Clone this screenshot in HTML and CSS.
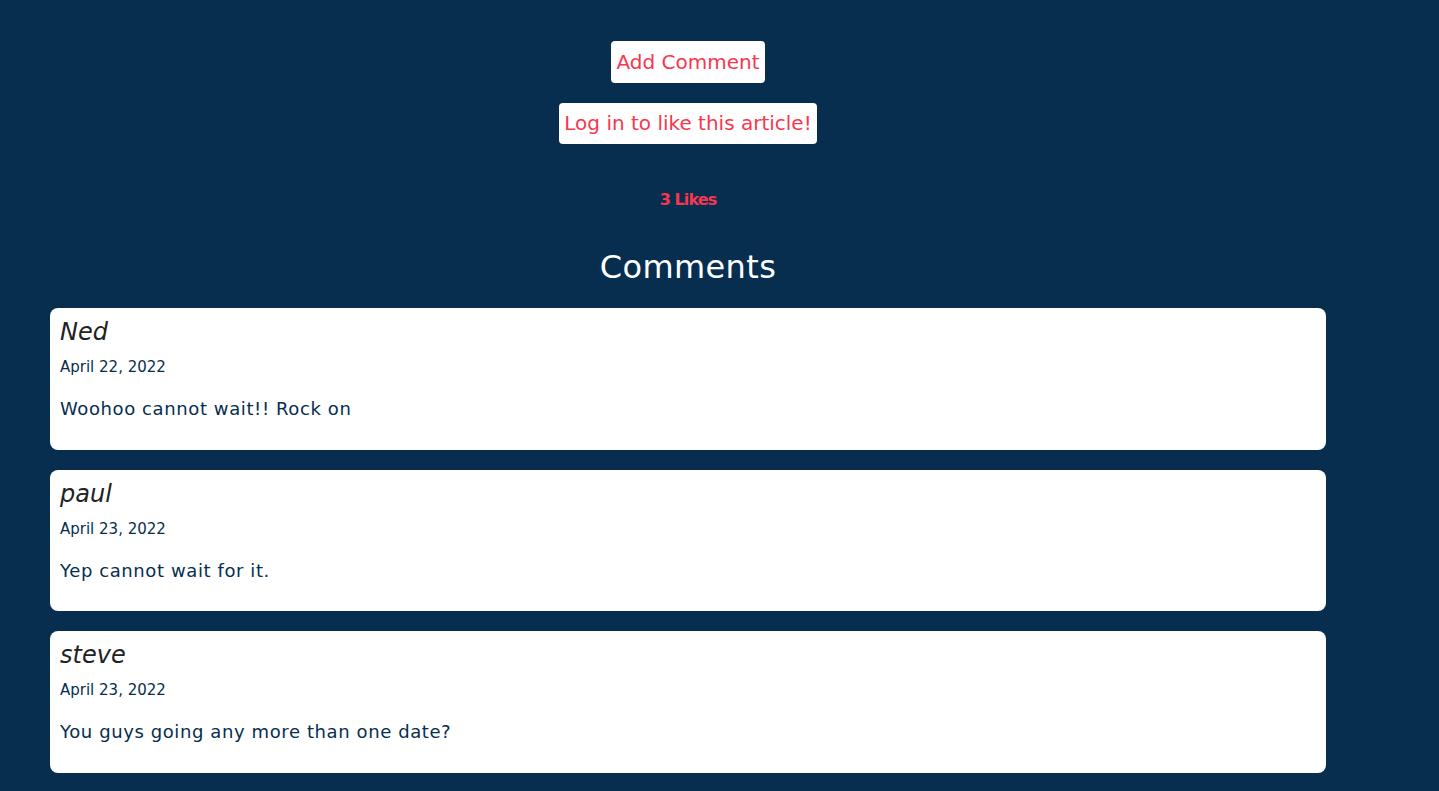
FILE: index.html
```html
<!DOCTYPE html>
<html lang="en">
<head>
<meta charset="utf-8">
<title>Comments</title>
<link rel="stylesheet" href="styles.css">
</head>
<body>
<main class="page">
  <div class="actions">
    <button class="btn" type="button">Add Comment</button>
    <button class="btn" type="button">Log in to like this article!</button>
  </div>
  <p class="likes">3 Likes</p>
  <h2 class="comments-title">Comments</h2>
  <ul class="comment-list">
    <li class="comment">
      <h3 class="comment-author">Ned</h3>
      <p class="comment-date">April 22, 2022</p>
      <p class="comment-body">Woohoo cannot wait!! Rock on</p>
    </li>
    <li class="comment">
      <h3 class="comment-author">paul</h3>
      <p class="comment-date">April 23, 2022</p>
      <p class="comment-body">Yep cannot wait for it.</p>
    </li>
    <li class="comment">
      <h3 class="comment-author">steve</h3>
      <p class="comment-date">April 23, 2022</p>
      <p class="comment-body">You guys going any more than one date?</p>
    </li>
  </ul>
</main>
</body>
</html>
```

FILE: styles.css
```css
* { box-sizing: border-box; }
html, body {
  margin: 0;
  padding: 0;
  background: #072e4f;
  font-family: "DejaVu Sans", "Open Sans", sans-serif;
}
.page {
  width: 1276px;
  margin-left: 50px;
  padding-top: 41px;
  display: flex;
  flex-direction: column;
  align-items: center;
}
.actions {
  display: flex;
  flex-direction: column;
  align-items: center;
  gap: 20px;
}
.btn {
  background: #fff;
  color: #f7374f;
  border: none;
  border-radius: 4px;
  font-family: inherit;
  font-size: 20px;
  line-height: 30px;
  padding: 5.75px 5px;
  cursor: pointer;
}
.likes {
  margin: 44px 0 0;
  color: #f7374f;
  font-weight: 700;
  font-size: 16px;
  line-height: 24px;
  letter-spacing: -0.9px;
}
.comments-title {
  margin: 30.5px 0 0;
  color: #fff;
  font-weight: 400;
  font-size: 32px;
  line-height: 48px;
  letter-spacing: 0.4px;
}
.comment-list {
  list-style: none;
  margin: 17.5px 0 0;
  padding: 0;
  width: 100%;
  display: flex;
  flex-direction: column;
  gap: 20px;
}
.comment {
  background: #fff;
  border-radius: 8px;
  padding: 6px 10px 0;
  height: 141.5px;
}
.comment-author {
  margin: 0;
  font-style: italic;
  font-weight: 400;
  font-size: 24px;
  line-height: 36px;
  color: #222;
}
.comment-date {
  margin: 5px 0 0;
  font-size: 15px;
  line-height: 24px;
  color: #072e4f;
}
.comment-body {
  margin: 16px 0 0;
  font-size: 18px;
  line-height: 27px;
  letter-spacing: 0.6px;
  color: #072e4f;
}
```
